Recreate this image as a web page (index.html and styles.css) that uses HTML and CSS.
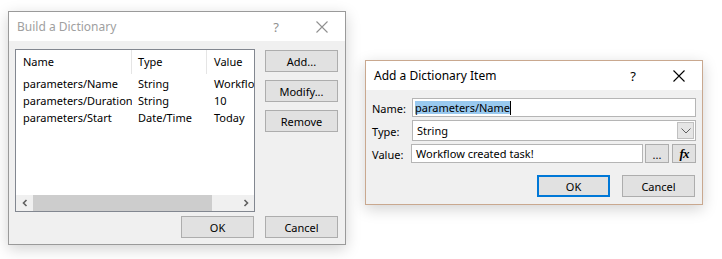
FILE: index.html
```html
<!DOCTYPE html>
<html lang="en">

<head>
    <meta charset="UTF-8">
    <title>Build a Dictionary</title>
    <link rel="stylesheet" href="styles.css">
</head>

<body>
    <div class="desktop">
        <!-- Build a Dictionary (inactive) -->
        <div class="dialog dialog-build inactive">
            <div class="titlebar">
                <span class="title">Build a Dictionary</span>
                <span class="tb-help">?</span>
                <span class="tb-close">
                    <svg width="12" height="12" viewBox="0 0 12 12"><path d="M0.5 0.5 L11.5 11.5 M11.5 0.5 L0.5 11.5" stroke="currentColor" stroke-width="1.1" fill="none"/></svg>
                </span>
            </div>
            <div class="body build-body">
                <div class="list">
                    <div class="list-head">
                        <div class="col col-name">Name</div>
                        <div class="col col-type">Type</div>
                        <div class="col col-value">Value</div>
                    </div>
                    <div class="list-rows">
                        <div class="row"><div class="col col-name">parameters/Name</div><div class="col col-type">String</div><div class="col col-value">Workflow created task!</div></div>
                        <div class="row"><div class="col col-name">parameters/Duration</div><div class="col col-type">String</div><div class="col col-value">10</div></div>
                        <div class="row"><div class="col col-name">parameters/Start</div><div class="col col-type">Date/Time</div><div class="col col-value">Today</div></div>
                    </div>
                    <div class="hscroll">
                        <span class="arrow">
                            <svg width="8" height="8" viewBox="0 0 8 8"><path d="M5.5 1 L2.5 4 L5.5 7" stroke="#606060" stroke-width="1.6" fill="none"/></svg>
                        </span>
                        <div class="track"><div class="thumb"></div></div>
                        <span class="arrow">
                            <svg width="8" height="8" viewBox="0 0 8 8"><path d="M2.5 1 L5.5 4 L2.5 7" stroke="#606060" stroke-width="1.6" fill="none"/></svg>
                        </span>
                    </div>
                </div>
                <div class="side-buttons">
                    <button class="btn">Add...</button>
                    <button class="btn">Modify...</button>
                    <button class="btn">Remove</button>
                </div>
                <div class="footer-buttons">
                    <button class="btn">OK</button>
                    <button class="btn">Cancel</button>
                </div>
            </div>
        </div>

        <!-- Add a Dictionary Item (active) -->
        <div class="dialog dialog-item">
            <div class="titlebar">
                <span class="title">Add a Dictionary Item</span>
                <span class="tb-help">?</span>
                <span class="tb-close">
                    <svg width="12" height="12" viewBox="0 0 12 12"><path d="M0.5 0.5 L11.5 11.5 M11.5 0.5 L0.5 11.5" stroke="currentColor" stroke-width="1.1" fill="none"/></svg>
                </span>
            </div>
            <div class="body item-body">
                <div class="form">
                    <label>Name:</label>
                    <div class="field"><span class="selected">parameters/Name</span><span class="caret"></span></div>
                    <label>Type:</label>
                    <div class="field combo">
                        <span>String</span>
                        <span class="drop">
                            <svg width="10" height="6" viewBox="0 0 10 6"><path d="M0.5 0.5 L5 5 L9.5 0.5" stroke="#606060" stroke-width="1" fill="none"/></svg>
                        </span>
                    </div>
                    <label>Value:</label>
                    <div class="value-row">
                        <div class="field">Workflow created task!</div>
                        <button class="btn small dots">...</button>
                        <button class="btn small fx">fx</button>
                    </div>
                </div>
                <div class="footer-buttons">
                    <button class="btn default">OK</button>
                    <button class="btn">Cancel</button>
                </div>
            </div>
        </div>
    </div>
</body>

</html>
```

FILE: styles.css
```css
:root {
    --face: #f0f0f0;
    --btn-face: #e1e1e1;
    --btn-border: #adadad;
    --text: #000000;
    --accent: #0078d7;
}

body {
    margin: 0;
    background: #ffffff;
    font-family: 'Noto Sans', 'Liberation Sans', sans-serif;
    font-size: 11px;
    color: var(--text);
}

.desktop {
    position: relative;
    width: 722px;
    height: 259px;
    overflow: hidden;
}

/* windows sit on the desktop at their own place */
.dialog {
    position: absolute;
    box-sizing: border-box;
    background: var(--face);
    display: flex;
    flex-direction: column;
    box-shadow: 0 4px 14px rgba(0, 0, 0, 0.18);
}

.dialog-build {
    left: 8px;
    top: 11px;
    width: 338px;
    height: 234px;
    border: 1px solid #9a9a9a;
}

.dialog-item {
    left: 365px;
    top: 60px;
    width: 338px;
    height: 145px;
    border: 1px solid #c9a88f;
}

.titlebar {
    height: 29px;
    flex-shrink: 0;
    background: #ffffff;
    display: flex;
    align-items: center;
    padding-left: 8px;
    font-size: 12px;
}

.title {
    flex-grow: 1;
}

.tb-help {
    width: 46px;
    text-align: center;
    font-size: 13px;
}

.tb-close {
    width: 46px;
    height: 29px;
    display: flex;
    align-items: center;
    justify-content: center;
}

.inactive .titlebar {
    color: #a0a0a0;
}

.inactive .tb-help,
.inactive .tb-close {
    color: #909090;
}

.btn {
    box-sizing: border-box;
    width: 73px;
    height: 22px;
    margin: 0;
    padding: 0;
    background: var(--btn-face);
    border: 1px solid var(--btn-border);
    font-family: inherit;
    font-size: 11px;
    color: var(--text);
}

.btn.default {
    border: 2px solid var(--accent);
}

/* Build a Dictionary */
.build-body {
    display: grid;
    grid-template-columns: 240px 73px;
    grid-template-rows: 163px 22px;
    column-gap: 10px;
    row-gap: 4px;
    padding: 8px 0 0 6px;
}

.list {
    box-sizing: border-box;
    background: #ffffff;
    border: 1px solid #828790;
    display: flex;
    flex-direction: column;
}

.list-head,
.row {
    display: flex;
    white-space: nowrap;
}

.list-head {
    height: 24px;
    align-items: center;
}

.list-head .col {
    height: 24px;
    line-height: 24px;
    border-right: 1px solid #e5e5e5;
    box-sizing: border-box;
}

.col {
    overflow: hidden;
    padding-left: 7px;
    box-sizing: border-box;
}

.col-name {
    width: 116px;
}

.col-type {
    width: 75px;
    padding-left: 6px;
}

.col-value {
    flex: 1;
}

.list-head .col-value {
    border-right: none;
}

.list-rows {
    flex-grow: 1;
}

.row {
    height: 17px;
    line-height: 17px;
}

.row:first-child {
    margin-top: 1px;
}

.hscroll {
    height: 16px;
    background: var(--face);
    display: flex;
    align-items: center;
}

.hscroll .arrow {
    width: 17px;
    height: 16px;
    display: flex;
    align-items: center;
    justify-content: center;
}

.track {
    flex: 1;
    height: 16px;
}

.thumb {
    width: 179px;
    height: 16px;
    background: #cdcdcd;
}

.side-buttons {
    display: flex;
    flex-direction: column;
    gap: 8px;
    padding-top: 1px;
}

.footer-buttons {
    grid-column: 1 / 3;
    display: flex;
    justify-content: flex-end;
    gap: 11px;
}

/* Add a Dictionary Item */
.item-body {
    padding: 8px 7px 0 6px;
    display: flex;
    flex-direction: column;
}

.form {
    display: grid;
    grid-template-columns: 40px 1fr;
    grid-template-rows: 19px 21px 19px;
    row-gap: 3px;
    align-items: center;
}

.form label {
    padding-top: 1px;
}

.field {
    box-sizing: border-box;
    height: 19px;
    background: #ffffff;
    border: 1px solid #b5b5b5;
    padding-left: 2px;
    display: flex;
    align-items: center;
    white-space: nowrap;
}

.selected {
    background: #99c9ef;
    line-height: 13px;
}

.caret {
    width: 1px;
    height: 14px;
    background: #000000;
}

.combo {
    height: 21px;
    padding-left: 4px;
    padding-right: 1px;
    justify-content: space-between;
}

.drop {
    box-sizing: border-box;
    width: 17px;
    height: 17px;
    background: #e5e5e5;
    border: 1px solid #c0c0c0;
    display: flex;
    align-items: center;
    justify-content: center;
}

.value-row {
    display: flex;
    gap: 2px;
    margin-left: -1px;
}

.value-row .field {
    width: 232px;
    padding-left: 4px;
}

.btn.small {
    width: 24px;
    height: 19px;
    line-height: 12px;
}

.dots {
    padding-top: 3px;
}

.fx {
    margin-left: 1px;
    font-family: 'Liberation Serif', serif;
    font-style: italic;
    font-weight: bold;
    font-size: 13px;
    letter-spacing: -1px;
}

.item-body .footer-buttons {
    margin-top: 12px;
    gap: 12px;
}
```
